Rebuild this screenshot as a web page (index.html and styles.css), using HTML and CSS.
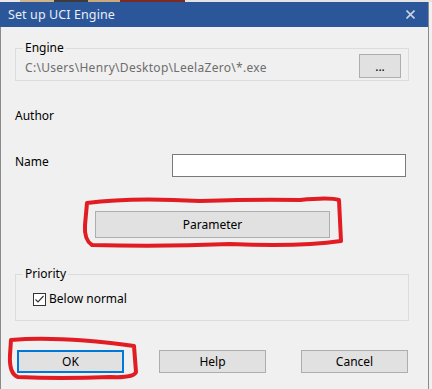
FILE: index.html
```html
<!DOCTYPE html>
<html lang="en">
<head>
    <meta charset="UTF-8">
    <title>Set up UCI Engine</title>
    <link rel="stylesheet" href="styles.css">
</head>
<body>
    <div class="desktop-strip"></div>
    <div class="window">
        <div class="titlebar">
            <span class="title">Set up UCI Engine</span>
            <svg class="close" width="9" height="9" viewBox="0 0 9 9">
                <path d="M0.5 0.5 L8.5 8.5 M8.5 0.5 L0.5 8.5" stroke="#c9d2e3" stroke-width="1.6"/>
            </svg>
        </div>

        <div class="content">
            <div class="group engine-group">
                <span class="group-title">Engine</span>
                <div class="engine-row">
                    <span class="path">C:\Users\Henry\Desktop\LeelaZero\*.exe</span>
                    <button class="btn browse">...</button>
                </div>
            </div>

            <div class="row author-row">
                <span class="label">Author</span>
            </div>

            <div class="row name-row">
                <span class="label">Name</span>
                <input type="text" class="name-input">
            </div>

            <button class="btn param-btn">Parameter</button>

            <div class="group priority-group">
                <span class="group-title">Priority</span>
                <label class="check-row">
                    <svg class="checkbox" width="13" height="13" viewBox="0 0 13 13">
                        <rect x="0.5" y="0.5" width="12" height="12" fill="#fff" stroke="#333"/>
                        <path d="M2.5 6.5 L5 9 L10.5 3" fill="none" stroke="#333" stroke-width="1.2"/>
                    </svg>
                    <span>Below normal</span>
                </label>
            </div>

            <div class="actions">
                <button class="btn action default">OK</button>
                <button class="btn action">Help</button>
                <button class="btn action">Cancel</button>
            </div>
        </div>

        <!-- red marker scribbles drawn over the dialog -->
        <svg class="scribbles" width="432" height="389" viewBox="0 0 432 389">
            <path d="M87 203 Q130 197 200 201 Q260 199 300 200 Q330 197 339 200 L341 241 Q300 247 230 244 Q160 247 92 245 Q84 240 85 225 Z"
                  fill="none" stroke="#e11d23" stroke-width="4" stroke-linejoin="round"/>
            <path d="M11 340 Q60 336 134 346 L136 372 Q134 378 110 377 Q60 379 18 377 Q9 374 10 355 Z"
                  fill="none" stroke="#e11d23" stroke-width="4" stroke-linejoin="round"/>
        </svg>
    </div>
</body>
</html>
```

FILE: styles.css
```css
body {
    margin: 0;
    background: #f0f0f0;
    font-family: "Noto Sans", sans-serif;
    font-size: 12px;
    color: #000;
}

.desktop-strip {
    height: 2px;
    background: linear-gradient(to right,
        #e9e9e9 0 20px, #d3b48a 20px 54px, #3c3c3c 54px 88px,
        #c9a87a 88px 120px, #7b2b22 120px 185px, #e4e4e4 185px);
}

.window {
    width: 427px;
    border-left: 1px solid #8a8a8a;
    border-right: 1px solid #8a8a8a;
    background: #f0f0f0;
    height: 387px;
}

.titlebar {
    height: 25px;
    margin: 0 0 0 -1px;
    background: #2b579a;
    display: flex;
    align-items: center;
    justify-content: space-between;
    padding: 0 13px 0 8px;
}

.title {
    color: #e9edf5;
    font-size: 12.5px;
    letter-spacing: 0.1px;
}

.content {
    padding: 0 19px 0 14px;
}

.group {
    border: 1px solid #dcdcdc;
}

/* caption sitting on the top border, takes no height */
.group-title {
    display: block;
    width: max-content;
    line-height: 16px;
    margin: -9px 0 -7px 0;
    padding: 0 2px;
    background: #f0f0f0;
}

.engine-group {
    margin-top: 21px;
    padding: 0 7px 2px 9px;
}

.engine-group .group-title {
    margin-left: -2px;
}

.engine-row {
    display: flex;
    align-items: center;
    margin-top: 5px;
}

.path {
    color: #6d6d6d;
    margin-top: 2px;
    letter-spacing: 0.3px;
}

.btn {
    font-family: inherit;
    font-size: 12px;
    color: #000;
    background: #e1e1e1;
    border: 1px solid #adadad;
    padding: 0;
}

.browse {
    margin-left: auto;
    width: 42px;
    height: 24px;
}

.row {
    display: flex;
    line-height: 16px;
}

.author-row {
    margin-top: 27px;
    height: 16px;
}

.name-row {
    margin-top: 30px;
    align-items: flex-start;
}

.name-row .label {
    width: 157px;
}

.name-input {
    width: 234px;
    height: 23px;
    box-sizing: border-box;
    border: 1px solid #7a7a7a;
    background: #fff;
    margin: 0;
}

.param-btn {
    display: block;
    margin: 34px 0 0 80px;
    width: 235px;
    height: 27px;
}

.priority-group {
    margin-top: 36px;
    padding: 0 0 13px 17px;
}

.priority-group .group-title {
    margin-left: -10px;
}

.check-row {
    display: flex;
    align-items: center;
    gap: 3px;
    line-height: 16px;
    margin-top: 16px;
}

.actions {
    margin: 29px 1px 0 2px;
    display: flex;
    justify-content: space-between;
}

.action {
    width: 107px;
    height: 23px;
}

.action.default {
    border: 2px solid #0078d7;
}

.scribbles {
    position: absolute;
    left: 0;
    top: 0;
    pointer-events: none;
}
```
